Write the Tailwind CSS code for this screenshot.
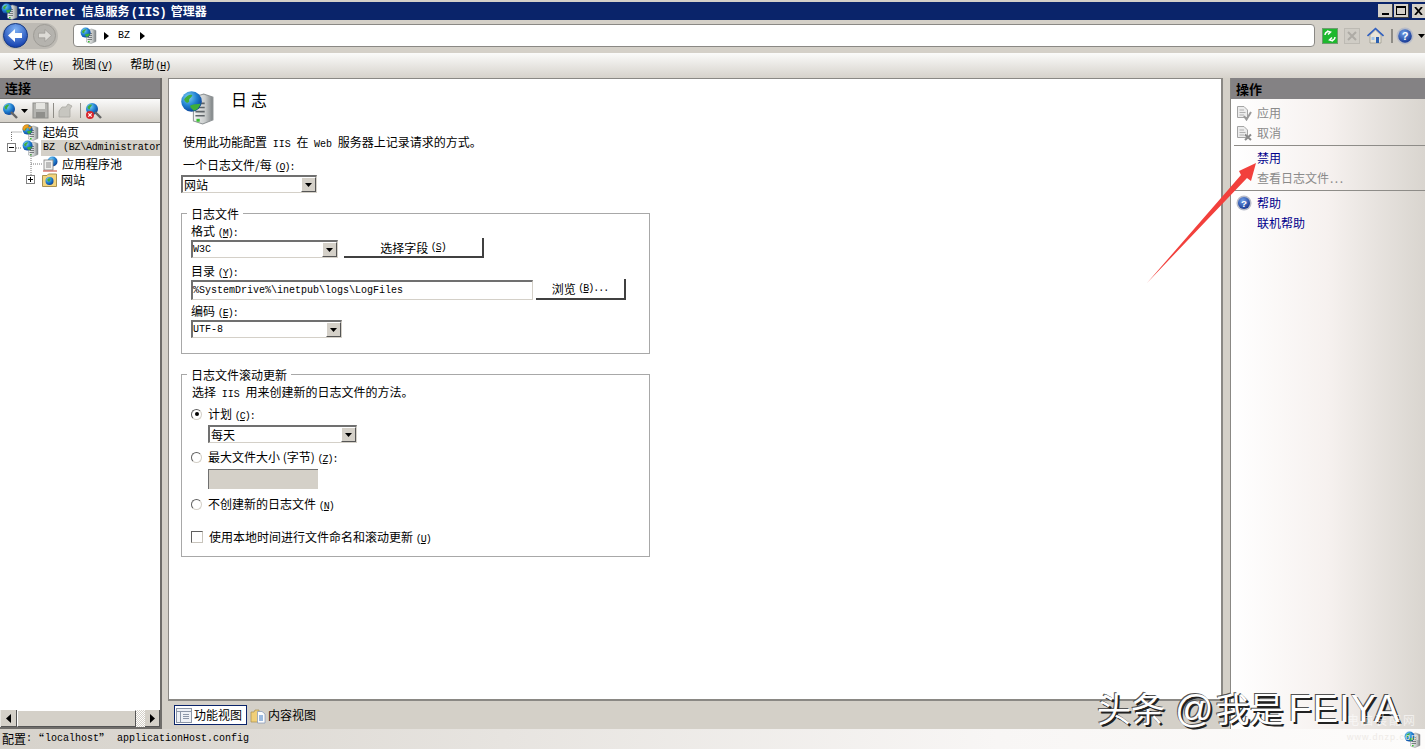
<!DOCTYPE html>
<html lang="zh-CN">
<head>
<meta charset="utf-8">
<title>Internet 信息服务 (IIS) 管理器</title>
<script src="https://cdn.jsdelivr.net/npm/@tailwindcss/browser@4"></script>
</head>
<body class="w-[1425px] h-[749px] overflow-hidden relative bg-[#d4d0c8] text-black text-[12px] leading-[14px] [font-family:'Noto_Sans_CJK_SC',sans-serif]">
<svg width="0" height="0" class="absolute">
  <defs>
    <radialGradient id="gl" cx="35%" cy="30%" r="75%"><stop offset="0" stop-color="#7fd0f5"/><stop offset=".55" stop-color="#1f7fd0"/><stop offset="1" stop-color="#0b3f95"/></radialGradient>
    <linearGradient id="sv" x1="0" x2="1"><stop offset="0" stop-color="#f4f5f5"/><stop offset=".6" stop-color="#c9cccc"/><stop offset="1" stop-color="#7d8284"/></linearGradient>
    <radialGradient id="hp" cx="40%" cy="30%" r="75%"><stop offset="0" stop-color="#6f9fe8"/><stop offset="1" stop-color="#12338f"/></radialGradient>
    <symbol id="srv" viewBox="0 0 17 17">
      <path d="M6.500 3.500 11.500 2 16 3.500V14.500L11 16.500 6.500 15Z" fill="url(#sv)" stroke="#8d9294" stroke-width=".5"/>
      <path d="M7.500 6.500h4.500M7.500 8.500h4.500M7.500 10.500h4.500M7.500 12.500h4.500" stroke="#5e6468" stroke-width=".8"/>
      <rect x="8" y="14" width="1.600" height="1.400" fill="#38c030"/>
      <circle cx="5.600" cy="5.600" r="5" fill="url(#gl)"/>
      <path d="M2 4.500C3.500 2.500 5 2 6 2.500 5.500 4 4 4 4.500 5.500 3.500 7 2.500 6 2 4.500ZM5 7.500C7 6.500 9 7 10 6.500 9.500 8.500 8 10 6.500 10 6 9 4.800 8.800 5 7.500Z" fill="#3fae3a"/>
    </symbol>
    <symbol id="help" viewBox="0 0 18 18">
      <circle cx="9" cy="9" r="8.500" fill="#b8bcc8"/><circle cx="9" cy="9" r="6.800" fill="url(#hp)"/>
      <text x="9" y="13" text-anchor="middle" fill="#fff" font-size="11" font-weight="700" font-family="Liberation Sans">?</text>
    </symbol>
    <symbol id="doc" viewBox="0 0 16 16">
      <path d="M1.500 1.500H8L11.500 5V12.500H1.500Z" fill="#ececec" stroke="#a4a4a4"/>
      <path d="M3.500 5H8M3.500 7.500H9.500M3.500 10H8" stroke="#b0b0b0"/>
    </symbol>
  </defs>
</svg>

<!-- title bar -->
<header class="h-[20px] border-t-2 border-[#d4d0c8] bg-[#0a246a] flex items-center text-white">
  <svg class="w-[17px] h-[17px] ml-[1px] shrink-0"><use href="#srv"/></svg>
  <h1 class="font-bold text-[12px] leading-[14px] h-[14px] whitespace-nowrap">
    <span class="[font-family:'Liberation_Mono',monospace]">Internet</span><span class="ml-[6px]">信息服务</span><span class="ml-[1px] mr-[4px] [font-family:'Liberation_Mono',monospace]">(IIS)</span><span>管理器</span>
  </h1>
  <div class="ml-auto flex items-center gap-0 pr-0 text-black">
    <span class="w-[15px] h-[14px] bg-[#d4d0c8] border-r border-b border-[#404040] flex items-end justify-center pb-[2px]"><i class="block w-[7px] h-[2px] bg-black"></i></span>
    <span class="ml-[1px] w-[15px] h-[14px] bg-[#d4d0c8] border-r border-b border-[#404040] flex items-center justify-center"><i class="block w-[10px] h-[9px] border border-t-2 border-black"></i></span>
    <span class="ml-[3px] w-[13px] h-[14px] bg-[#d4d0c8] flex items-center justify-center">
      <svg class="w-[9px] h-[8px]" viewBox="0 0 9 8"><path d="M1 0 8 8M8 0 1 8" stroke="#000" stroke-width="1.800"/></svg>
    </span>
  </div>
</header>

<!-- navigation bar -->
<nav class="h-[33px] bg-[#d4d0c8] flex items-center">
  <div class="ml-[2px] w-[56px] h-[26px] rounded-full bg-[#bdbab4] flex items-center relative -top-[1px]">
    <svg class="w-[25px] h-[25px] ml-[1px]" viewBox="0 0 25 25"><defs><radialGradient id="bk" cx="50%" cy="25%" r="80%"><stop offset="0" stop-color="#7fb2f5"/><stop offset="1" stop-color="#0a35a8"/></radialGradient></defs><circle cx="12.500" cy="12.500" r="12" fill="url(#bk)" stroke="#183a80"/><path d="M5 12.500 12 6v4h7v5h-7v4Z" fill="#fff"/></svg>
    <svg class="w-[23px] h-[23px] ml-[5px]" viewBox="0 0 25 25"><circle cx="12.500" cy="12.500" r="12" fill="#b5b3ae" stroke="#9c9a94"/><path d="M20 12.500 13 6v4H6v5h7v4Z" fill="#dddbd6" stroke="#8f8d88" stroke-width=".6"/></svg>
  </div>
  <div class="ml-[15px] w-[1242px] h-[23px] bg-white border border-[#8a8884] rounded-[4px] flex items-center relative -top-[1px]">
    <svg class="w-[17px] h-[17px] ml-[6px]"><use href="#srv"/></svg>
    <svg class="w-[6px] h-[8px] ml-[7px]" viewBox="0 0 6 8"><path d="M0 0 5 4 0 8Z" fill="#000"/></svg>
    <span class="ml-[8px] [font-family:'Liberation_Mono',monospace] text-[10px]">BZ</span>
    <svg class="w-[6px] h-[8px] ml-[10px]" viewBox="0 0 6 8"><path d="M0 0 5 4 0 8Z" fill="#000"/></svg>
  </div>
  <div class="ml-[7px] flex items-center relative -top-[1px]">
    <svg class="w-[16px] h-[16px]" viewBox="0 0 16 16"><rect width="15" height="15" x=".5" y=".5" fill="#1eb82e" stroke="#6f9a70"/><path d="M3 7c0-3 3-4 5-3M5 3 8.500 4 6 6.500M13 9c0 3-3 4-5 3M11 13 7.500 12 10 9.500" stroke="#fff" stroke-width="1.500" fill="none"/></svg>
    <svg class="w-[16px] h-[16px] ml-[6px]" viewBox="0 0 16 16"><rect width="15" height="15" x=".5" y=".5" fill="#cfccc5" stroke="#bdbab3"/><path d="M4 4 12 12M12 4 4 12" stroke="#aeaba5" stroke-width="2"/></svg>
    <svg class="w-[17px] h-[17px] ml-[7px]" viewBox="0 0 17 17"><path d="M3 8V16H14V8L8.500 3Z" fill="#e8e4d8" stroke="#8c8a80" stroke-width=".6"/><path d="M.5 9 8.500 1.500 16.500 9" fill="none" stroke="#2f5fc0" stroke-width="1.600"/><rect x="9" y="10" width="3" height="6" fill="#2a5fb0"/><rect x="4.500" y="10" width="3" height="3" fill="#9fc4ea"/></svg>
    <i class="block w-[2px] h-[14px] bg-[#8e8c86] ml-[7px]"></i>
    <svg class="w-[18px] h-[18px] ml-[3px]"><use href="#help"/></svg>
    <svg class="w-[7px] h-[4px] ml-[4px]" viewBox="0 0 7 4"><path d="M0 0h7L3.500 4Z" fill="#000"/></svg>
  </div>
</nav>

<!-- menu bar -->
<div class="h-[25px] bg-linear-to-b from-[#fbfbfa] to-[#d6d2cb] flex items-center pl-[13px] pb-[4px]">
  <span class="h-[14px]">文件<span class="ml-[1px] tracking-[-1px] [font-family:'Liberation_Mono',monospace] text-[10px]">(<u>F</u>)</span></span>
  <span class="h-[14px] ml-[19px]">视图<span class="ml-[1px] tracking-[-1px] [font-family:'Liberation_Mono',monospace] text-[10px]">(<u>V</u>)</span></span>
  <span class="h-[14px] ml-[18px]">帮助<span class="ml-[1px] tracking-[-1px] [font-family:'Liberation_Mono',monospace] text-[10px]">(<u>H</u>)</span></span>
</div>

<!-- main -->
<main class="h-[651px] flex">
  <!-- connections -->
  <aside class="w-[162px] shrink-0 border-r-2 border-b-2 border-[#6f6d6a] bg-white flex flex-col">
    <div class="h-[21px] bg-[#848284] pl-[5px] flex items-center font-bold text-[13px] border-b border-[#6f6d6a]">连接</div>
    <div class="h-[24px] bg-linear-to-b from-[#fafafa] to-[#d4d0c8] flex items-center border-b border-[#8e8c88]">
      <svg class="w-[17px] h-[17px] ml-[2px]" viewBox="0 0 17 17"><circle cx="7" cy="7" r="6" fill="url(#gl)"/><path d="M2.500 5C4 3 6 2 7 3 6 5 5 5 5 7 4 8 3 7 2.500 5Z" fill="#3fae3a"/><path d="M9 10 15 16" stroke="#666" stroke-width="2.400"/></svg>
      <svg class="w-[7px] h-[4px] ml-[2px]" viewBox="0 0 7 4"><path d="M0 0h7L3.500 4Z" fill="#000"/></svg>
      <svg class="w-[17px] h-[17px] ml-[4px]" viewBox="0 0 17 17"><rect x="1" y="1" width="15" height="15" fill="#b4b4b0" stroke="#8e8e8a"/><rect x="4" y="1" width="9" height="6" fill="#e5e5e1"/><rect x="4" y="10" width="9" height="6" fill="#8f8f8b"/></svg>
      <i class="block w-[1px] h-[15px] bg-[#8e8c86] ml-[4px]"></i>
      <svg class="w-[16px] h-[16px] ml-[4px]" viewBox="0 0 16 16"><path d="M1 8 4 4H8L10 1 14 3 12 6V14H1Z" fill="#c7c6c0" stroke="#a9a8a2" stroke-width=".8"/></svg>
      <i class="block w-[1px] h-[15px] bg-[#8e8c86] ml-[6px]"></i>
      <svg class="w-[18px] h-[18px] ml-[3px]" viewBox="0 0 18 18"><circle cx="8" cy="7" r="6" fill="url(#gl)"/><path d="M3.500 5C5 3 7 2 8 3 7 5 6 5 6 7 5 8 4 7 3.500 5Z" fill="#3fae3a"/><path d="M11 10 17 16" stroke="#666" stroke-width="2.400"/><circle cx="6" cy="13" r="4" fill="#d8262c"/><path d="M4.300 11.300 7.700 14.700M7.700 11.300 4.300 14.700" stroke="#fff" stroke-width="1.200"/></svg>
    </div>
    <div class="relative flex-1 pt-[1px] min-h-0">
      <svg class="absolute left-0 top-0 w-[60px] h-[70px]" viewBox="0 0 60 70"><path d="M11.500 9V19M11.500 9H22M16 25H22M31 25V54M31 41H42" stroke="#777" stroke-dasharray="1 1" fill="none"/></svg>
      <div class="absolute left-[7px] top-[20px] w-[9px] h-[9px] border border-[#808080] bg-white flex items-center justify-center"><i class="block w-[5px] h-[1px] bg-black"></i></div>
      <div class="absolute left-[26px] top-[52px] w-[9px] h-[9px] border border-[#808080] bg-white flex items-center justify-center"><i class="block w-[5px] h-[1px] bg-black"></i><i class="absolute block w-[1px] h-[5px] bg-black"></i></div>
      <div class="h-[16px] flex items-center pl-[22px]"><svg class="w-[17px] h-[17px] shrink-0" viewBox="0 0 17 17"><use href="#srv"/><path d="M1 6C0 2 3 0 7 1L6 3 10 2.500 7.500 6 7 4C4 3.500 3 4.500 3 6.500Z" fill="#f0a020" stroke="#b06a00" stroke-width=".4"/></svg><span class="ml-[4px]">起始页</span></div>
      <div class="h-[16px] flex items-center pl-[22px]"><svg class="w-[17px] h-[17px] shrink-0"><use href="#srv"/></svg><span class="ml-[2px] pl-[2px] flex-1 h-[16px] bg-[#d4d0c8] flex items-center whitespace-pre overflow-hidden [font-family:'Liberation_Mono',monospace] text-[10px]"><span>BZ</span><span class="ml-[8px] tracking-[-0.25px]">(BZ\Administrator</span></span></div>
      <div class="h-[16px] flex items-center pl-[42px]"><svg class="w-[16px] h-[16px] shrink-0" viewBox="0 0 16 16"><circle cx="10.500" cy="5.500" r="5" fill="url(#gl)"/><rect x="2" y="4" width="9" height="10" fill="#f1f1ef" stroke="#7f7f7f" stroke-width=".8"/><path d="M4 7h5M4 9h5M4 11h5" stroke="#888"/><path d="M1 15h14" stroke="#c84030"/></svg><span class="ml-[4px]">应用程序池</span></div>
      <div class="h-[16px] flex items-center pl-[42px]"><svg class="w-[15px] h-[14px] shrink-0" viewBox="0 0 15 14"><path d="M.5 13.500V2.500H5L6.500 1H14.500V13.500Z" fill="#f2d47c" stroke="#a89050"/><circle cx="7.500" cy="8" r="4" fill="url(#gl)"/><path d="M5 7c1-2 3-2 4-1-1 1-1 2-2 3Z" fill="#3fae3a"/></svg><span class="ml-[4px]">网站</span></div>
      <!-- scrollbar -->
      <div class="absolute left-0 right-0 bottom-0 h-[17px] flex bg-[#e9e7e2]">
        <div class="w-[16px] ml-[1px] bg-[#d4d0c8] border-r border-b border-[#555] flex items-center justify-center"><svg class="w-[5px] h-[9px]" viewBox="0 0 5 9"><path d="M5 0V9L0 4.500Z" fill="#000"/></svg></div>
        <div class="w-[120px] bg-[#d4d0c8] border-t border-l border-white border-r border-b border-r-[#555] border-b-[#555]"></div>
        <div class="w-[9px] bg-[repeating-conic-gradient(#d4d0c8_0_25%,#fff_0_50%)] bg-[length:2px_2px]"></div>
        <div class="w-[15px] bg-[#d4d0c8] border-r border-b border-[#555] flex items-center justify-center"><svg class="w-[5px] h-[9px]" viewBox="0 0 5 9"><path d="M0 0V9L5 4.500Z" fill="#000"/></svg></div>
      </div>
    </div>
  </aside>

  <!-- center -->
  <div class="ml-[6px] w-[1055px] shrink-0 flex flex-col">
    <section class="h-[623px] bg-white border border-[#8a8884] border-r-2 border-b-2 px-[12px]">
      <div class="flex h-[34px] mt-[11px]">
        <svg class="w-[35px] h-[35px] -ml-[1px] shrink-0"><use href="#srv"/></svg>
        <h2 class="ml-[16px] text-[16px] leading-[20px] h-[20px] -mt-[1px] tracking-[4px]">日志</h2>
      </div>
      <p class="h-[14px] mt-[11px] ml-[2px] [word-spacing:3px]">使用此功能配置 <span class="[font-family:'Liberation_Mono',monospace] text-[10px]">IIS</span> 在 <span class="[font-family:'Liberation_Mono',monospace] text-[10px]">Web</span> 服务器上记录请求的方式。</p>
      <p class="h-[14px] mt-[9px] ml-[2px]">一个日志文件/每 <span class="tracking-[-1px] [font-family:'Liberation_Mono',monospace] text-[10px]">(<u>O</u>):</span></p>
      <div class="mt-[3px] w-[136px] h-[18px] flex bg-white border-t-2 border-l-2 border-[#707070] border-r border-b border-r-[#d4d0c8] border-b-[#d4d0c8]">
        <span class="flex-1 pl-[1px] leading-[15px]">网站</span>
        <span class="w-[15px] bg-[#d4d0c8] border-r border-b border-[#555] border-t border-l border-t-white border-l-white flex items-center justify-center"><svg class="w-[7px] h-[4px]" viewBox="0 0 7 4"><path d="M0 0h7L3.500 4Z" fill="#000"/></svg></span>
      </div>

      <div class="relative mt-[20px] w-[469px] h-[141px] border border-[#a8a8a8] pt-[10px] pl-[9px]">
        <span class="absolute left-[5px] -top-[7px] bg-white px-[4px]">日志文件</span>
        <p class="h-[14px]">格式 <span class="tracking-[-1px] [font-family:'Liberation_Mono',monospace] text-[10px]">(<u>M</u>):</span></p>
        <div class="flex h-[20px]">
          <div class="mt-[2px] w-[147px] h-[18px] flex bg-white border-t-2 border-l-2 border-[#707070] border-r border-b border-r-[#d4d0c8] border-b-[#d4d0c8]">
            <span class="flex-1 leading-[16px] [font-family:'Liberation_Mono',monospace] text-[10px]">W3C</span>
            <span class="w-[15px] bg-[#d4d0c8] border-r border-b border-[#555] border-t border-l border-t-white border-l-white flex items-center justify-center"><svg class="w-[7px] h-[4px]" viewBox="0 0 7 4"><path d="M0 0h7L3.500 4Z" fill="#000"/></svg></span>
          </div>
          <button class="ml-[6px] w-[140px] h-[20px] pt-[1px] bg-white border-r-2 border-b-2 border-[#404040] flex items-center justify-center">选择字段&nbsp;<span class="tracking-[-1px] [font-family:'Liberation_Mono',monospace] text-[10px]">(<u>S</u>)</span></button>
        </div>
        <p class="h-[14px] mt-[6px]">目录 <span class="tracking-[-1px] [font-family:'Liberation_Mono',monospace] text-[10px]">(<u>Y</u>):</span></p>
        <div class="flex h-[21px] mt-[1px]">
          <div class="mt-[1px] w-[342px] h-[20px] bg-white border-t-2 border-l-2 border-[#707070] border-r border-b border-r-[#d4d0c8] border-b-[#d4d0c8] [font-family:'Liberation_Mono',monospace] text-[10px] leading-[17px]">%SystemDrive%\inetpub\logs\LogFiles</div>
          <button class="ml-[3px] w-[90px] h-[21px] pt-[1px] bg-white border-r-2 border-b-2 border-[#404040] flex items-center justify-center">浏览&nbsp;<span class="tracking-[-1px] [font-family:'Liberation_Mono',monospace] text-[10px]">(<u>B</u>)...</span></button>
        </div>
        <p class="h-[14px] mt-[4px]">编码 <span class="tracking-[-1px] [font-family:'Liberation_Mono',monospace] text-[10px]">(<u>E</u>):</span></p>
        <div class="mt-[2px] w-[151px] h-[18px] flex bg-white border-t-2 border-l-2 border-[#707070] border-r border-b border-r-[#d4d0c8] border-b-[#d4d0c8]">
          <span class="flex-1 leading-[15px] [font-family:'Liberation_Mono',monospace] text-[10px]">UTF-8</span>
          <span class="w-[15px] bg-[#d4d0c8] border-r border-b border-[#555] border-t border-l border-t-white border-l-white flex items-center justify-center"><svg class="w-[7px] h-[4px]" viewBox="0 0 7 4"><path d="M0 0h7L3.500 4Z" fill="#000"/></svg></span>
        </div>
      </div>

      <div class="relative mt-[20px] w-[469px] h-[183px] border border-[#a8a8a8] pt-[10px] pl-[9px]">
        <span class="absolute left-[5px] -top-[7px] bg-white px-[4px]">日志文件滚动更新</span>
        <p class="h-[14px] ml-[1px] [word-spacing:3px]">选择 <span class="[font-family:'Liberation_Mono',monospace] text-[10px]">IIS</span> 用来创建新的日志文件的方法。</p>
        <div class="mt-[8px] h-[14px] flex items-center">
          <span class="w-[11px] h-[11px] rounded-full bg-white border border-t-[#606060] border-l-[#606060] border-r-[#d4d0c8] border-b-[#d4d0c8] flex items-center justify-center"><i class="block w-[4px] h-[4px] rounded-full bg-black"></i></span>
          <span class="ml-[6px] h-[14px]">计划 <span class="tracking-[-1px] [font-family:'Liberation_Mono',monospace] text-[10px]">(<u>C</u>):</span></span>
        </div>
        <div class="mt-[4px] ml-[17px] w-[149px] h-[18px] flex bg-white border-t-2 border-l-2 border-[#707070] border-r border-b border-r-[#d4d0c8] border-b-[#d4d0c8]">
          <span class="flex-1 pl-[1px] leading-[15px]">每天</span>
          <span class="w-[15px] bg-[#d4d0c8] border-r border-b border-[#555] border-t border-l border-t-white border-l-white flex items-center justify-center"><svg class="w-[7px] h-[4px]" viewBox="0 0 7 4"><path d="M0 0h7L3.500 4Z" fill="#000"/></svg></span>
        </div>
        <div class="mt-[7px] h-[14px] flex items-center">
          <span class="w-[11px] h-[11px] rounded-full bg-white border border-t-[#606060] border-l-[#606060] border-r-[#d4d0c8] border-b-[#d4d0c8]"></span>
          <span class="ml-[6px] h-[14px]">最大文件大小 (字节) <span class="tracking-[-1px] [font-family:'Liberation_Mono',monospace] text-[10px]">(<u>Z</u>):</span></span>
        </div>
        <div class="mt-[5px] ml-[17px] w-[110px] h-[20px] bg-[#d4d0c8] border-t border-l border-[#707070]"></div>
        <div class="mt-[8px] h-[14px] flex items-center">
          <span class="w-[11px] h-[11px] rounded-full bg-white border border-t-[#606060] border-l-[#606060] border-r-[#d4d0c8] border-b-[#d4d0c8]"></span>
          <span class="ml-[6px] h-[14px]">不创建新的日志文件 <span class="tracking-[-1px] [font-family:'Liberation_Mono',monospace] text-[10px]">(<u>N</u>)</span></span>
        </div>
        <div class="mt-[19px] h-[14px] flex items-center">
          <span class="w-[12px] h-[12px] bg-white border border-t-[#606060] border-l-[#606060] border-r-[#c8c4bc] border-b-[#c8c4bc]"></span>
          <span class="ml-[6px] h-[14px]">使用本地时间进行文件命名和滚动更新 <span class="tracking-[-1px] [font-family:'Liberation_Mono',monospace] text-[10px]">(<u>U</u>)</span></span>
        </div>
      </div>
    </section>
    <div class="h-[28px] flex items-center pl-[6px]">
      <span class="h-[20px] w-[73px] border border-[#0a246a] bg-white flex items-center pl-[1px]">
        <svg class="w-[16px] h-[15px]" viewBox="0 0 16 15"><rect x=".5" y=".5" width="15" height="14" fill="#eef1f6" stroke="#8d97a8"/><path d="M.5 3.500h15M4.500 3.500v11" stroke="#8d97a8"/><path d="M7 6.500h6M7 8.500h6M7 10.500h6" stroke="#8d97a8"/></svg>
        <span class="ml-[2px]">功能视图</span>
      </span>
      <svg class="w-[16px] h-[17px] ml-[3px]" viewBox="0 0 16 17"><path d="M1 15V5H4L5 3H9V15Z" fill="#f0cf78" stroke="#a88c4a" stroke-width=".7"/><path d="M7.500 4.500H12L15 7V16H7.500Z" fill="#fdfdfd" stroke="#7f93b4" stroke-width=".7"/><path d="M9 9h4M9 11h4M9 13h4" stroke="#3a78c4"/></svg>
      <span class="ml-[2px]">内容视图</span>
    </div>
  </div>

  <!-- actions -->
  <aside class="ml-[7px] flex-1 border-l border-[#8a8884] bg-linear-to-r from-white via-[#f6f1ef] to-[#d9d5cf] flex flex-col">
    <div class="h-[21px] bg-[#848284] pl-[5px] flex items-center font-bold text-[13px]">操作</div>
    <div class="pt-[4px]">
      <div class="h-[20px] flex items-center text-[#8a8a8a]"><svg class="w-[16px] h-[16px] ml-[5px]" viewBox="0 0 16 16"><use href="#doc"/><path d="M8 11 10.500 14.500 15 7" fill="none" stroke="#9a9a9a" stroke-width="2"/></svg><span class="ml-[5px]">应用</span></div>
      <div class="h-[20px] flex items-center text-[#8a8a8a]"><svg class="w-[16px] h-[16px] ml-[5px]" viewBox="0 0 16 16"><use href="#doc"/><path d="M9 9.500 15 15M15 9.500 9 15" fill="none" stroke="#8a8a8a" stroke-width="2"/></svg><span class="ml-[5px]">取消</span></div>
      <div class="mt-[2px] mb-[2px] ml-[3px] h-[1px] bg-[#8e8c88]"></div>
      <div class="h-[20px] flex items-center pl-[26px] text-[#00008b] mt-[1px]">禁用</div>
      <div class="h-[20px] flex items-center pl-[26px] text-[#8a8a8a]">查看日志文件<span class="tracking-[1.5px] ml-[1px]">...</span></div>
      <div class="mt-[2px] mb-[2px] ml-[3px] h-[1px] bg-[#8e8c88]"></div>
      <div class="h-[20px] flex items-center text-[#00008b]"><svg class="w-[16px] h-[16px] ml-[5px]"><use href="#help"/></svg><span class="ml-[5px]">帮助</span></div>
      <div class="h-[20px] flex items-center pl-[26px] text-[#00008b]">联机帮助</div>
    </div>
  </aside>
</main>

<!-- status bar -->
<footer class="h-[20px] bg-linear-to-r from-[#d6d2cb] via-[#f8f6f5] via-70% to-[#fdfcfb] flex items-center pl-[2px]">
  <span>配置</span><span class="[font-family:'Liberation_Mono',monospace] text-[10px] whitespace-pre">:</span><span class="w-[12px] text-right">“</span><span class="ml-[1px] [font-family:'Liberation_Mono',monospace] text-[10px]">localhost</span><span class="w-[12px]">”</span><span class="ml-[6px] [font-family:'Liberation_Mono',monospace] text-[10px]">applicationHost.config</span>
  <svg class="w-[17px] h-[17px] ml-auto mr-[4px]"><use href="#srv"/></svg>
</footer>

<!-- annotation arrow -->
<svg class="absolute left-[1140px] top-[155px] w-[125px] h-[135px] pointer-events-none" viewBox="1140 155 125 135"><path d="M1147 283 1241 175 1239 171 1256 163 1251 181 1247 178Z" fill="#f2403c"/></svg>

<!-- watermarks -->
<div class="absolute left-[1097px] top-[685px] text-[34px] leading-[46px] h-[46px] text-white whitespace-nowrap [text-shadow:2px_2px_0_#222,-1px_-1px_0_#555]">头条<span class="ml-[10px] mr-[2px] [font-family:'Liberation_Sans',sans-serif] text-[38px]">@</span>我是<span class="ml-[5px] tracking-[1px] [font-family:'Liberation_Sans',sans-serif] text-[38px]">FEIYA</span></div>
<div class="absolute left-[1347px] top-[713px] text-[12px] leading-[14px] text-white/60 tracking-[2px] whitespace-nowrap">电脑装配网</div>
<div class="absolute left-[1347px] top-[731px] text-[9px] leading-[12px] text-[#eeeae6] tracking-[1px] whitespace-nowrap [font-family:'Liberation_Sans',sans-serif]">www.dnzp.com</div>
</body>
</html>
